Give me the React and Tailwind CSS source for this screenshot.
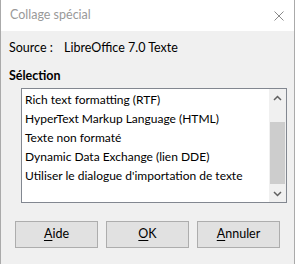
import { useState } from 'react'

const formats = [
  'Rich text formatting (RTF)',
  'HyperText Markup Language (HTML)',
  'Texte non formaté',
  'Dynamic Data Exchange (lien DDE)',
  "Utiliser le dialogue d'importation de texte",
]

function Btn({ letter, rest }) {
  return (
    <button className="w-[83px] h-[27px] bg-[#e1e1e1] border border-[#adadad] text-[12.5px] text-black flex items-center justify-center">
      <span className="underline underline-offset-2">{letter}</span>
      {rest}
    </button>
  )
}

export default function App() {
  const [selected] = useState(null)

  return (
    <div className="w-[295px] h-[264px] bg-[#f0f0f0] border-x border-[#aaaaaa] flex flex-col font-['Lato',sans-serif] text-[12px] text-black">
      {/* Title bar */}
      <div className="h-[31px] bg-white flex items-center justify-between pl-[9px] pr-[10px] shrink-0">
        <span className="text-[#999999] text-[12.5px]">Collage spécial</span>
        <svg width="10" height="10" viewBox="0 0 10 10" className="text-[#8a8a8a]">
          <path d="M0.5 0.5 L9.5 9.5 M9.5 0.5 L0.5 9.5" stroke="currentColor" strokeWidth="1" fill="none" />
        </svg>
      </div>

      <div className="flex flex-col px-[8px] pt-[8px]">
        <div className="flex h-[18px] items-center text-[12.5px]">
          <span className="w-[55px]">Source :</span>
          <span>LibreOffice 7.0 Texte</span>
        </div>
        <div className="font-bold mt-[10px] h-[18px] flex items-center text-[12.5px]">Sélection</div>

        {/* List */}
        <div className="ml-[12px] mt-[3px] w-[266px] h-[115px] bg-white border border-[#828790] flex">
          <div className="flex-1 pt-[1px] pl-[3px]">
            {formats.map((f, i) => (
              <div key={f} className={`h-[19px] flex items-center whitespace-nowrap ${selected === i ? 'bg-[#0078d7] text-white' : ''}`}>
                {f}
              </div>
            ))}
          </div>
          <div className="w-[17px] bg-[#f0f0f0] flex flex-col">
            <div className="h-[17px] flex items-center justify-center">
              <svg width="9" height="6" viewBox="0 0 9 6">
                <path d="M1 5 L4.5 1.5 L8 5" stroke="#606060" strokeWidth="1.5" fill="none" />
              </svg>
            </div>
            <div className="h-[16px]" />
            <div className="mx-[1px] h-[62px] bg-[#cdcdcd]" />
            <div className="flex-1" />
            <div className="h-[17px] flex items-center justify-center">
              <svg width="9" height="6" viewBox="0 0 9 6">
                <path d="M1 1 L4.5 4.5 L8 1" stroke="#606060" strokeWidth="1.5" fill="none" />
              </svg>
            </div>
          </div>
        </div>

        {/* Buttons */}
        <div className="mt-[18px] ml-[6px] flex gap-[8px]">
          <Btn letter="A" rest="ide" />
          <Btn letter="O" rest="K" />
          <Btn letter="A" rest="nnuler" />
        </div>
      </div>
    </div>
  )
}
